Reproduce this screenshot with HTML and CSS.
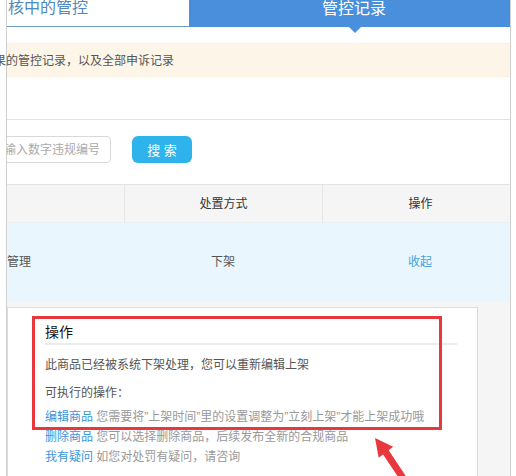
FILE: index.html
```html
<!DOCTYPE html>
<html lang="zh-CN">
<head>
<meta charset="utf-8">
<title>管控记录</title>
<link rel="stylesheet" href="styles.css">
</head>
<body>
<div class="wrap">
  <div class="tabs">
    <div class="tab">核中的管控</div>
    <div class="tab active">管控记录</div>
  </div>
  <div class="notice">结果的管控记录，以及全部申诉记录</div>
  <div class="search">
    <input class="kw" type="text" placeholder="请输入数字违规编号">
    <button class="btn">搜 索</button>
  </div>
  <div class="table">
    <div class="thead">
      <div class="c c1"></div>
      <div class="c c2">处置方式</div>
      <div class="c c3">操作</div>
    </div>
    <div class="trow">
      <div class="c c1">管理</div>
      <div class="c c2">下架</div>
      <div class="c c3"><a class="link">收起</a></div>
    </div>
    <div class="detail">
      <div class="panel">
        <div class="ptitle">操作</div>
        <p class="ptext first">此商品已经被系统下架处理，您可以重新编辑上架</p>
        <p class="ptext second">可执行的操作：</p>
        <ul class="ops">
          <li><a class="link">编辑商品</a> <span class="desc">您需要将”上架时间”里的设置调整为”立刻上架”才能上架成功哦</span></li>
          <li><a class="link">删除商品</a> <span class="desc">您可以选择删除商品，后续发布全新的合规商品</span></li>
          <li><a class="link">我有疑问</a> <span class="desc">如您对处罚有疑问，请咨询</span></li>
        </ul>
      </div>
    </div>
  </div>
</div>
<svg class="annot" width="516" height="476" viewBox="0 0 516 476">
  <rect x="33.5" y="317.5" width="407" height="111" fill="none" stroke="#e8383d" stroke-width="3"/>
  <polygon fill="#e8383d" points="375,438 393.1,446.8 388.7,450.2 411,484 405.5,488 383.1,454.4 378.7,457.8"/>
</svg>
</body>
</html>
```
FILE: styles.css
```css
* { box-sizing: border-box; }
html, body {
  margin: 0;
  padding: 0;
  background: #fff;
  overflow: hidden;
}
body {
  width: 516px;
  height: 476px;
  font-family: "Liberation Sans", "Noto Sans CJK SC", sans-serif;
  font-size: 12px;
  color: #555;
}
.wrap {
  margin-left: 6px;
  width: 505px;
  height: 560px;
  border-left: 1px solid #cfcfcf;
  border-right: 1px solid #cfcfcf;
}
.tabs {
  display: flex;
  height: 37px;
  margin-top: -10px;
}
.tab {
  width: 182px;
  border-bottom: 1px solid #6f9bc2;
  font-size: 16px;
  line-height: 36px;
  color: #4f89bb;
  padding-left: 1px;
}
.tab.active {
  flex: 1;
  width: auto;
  border-bottom: none;
  background: #4a8fdc;
  color: #fff;
  line-height: 37px;
  text-align: center;
  padding-left: 9px;
  position: relative;
}
.tab.active::after {
  content: "";
  position: absolute;
  left: 160px;
  bottom: -6px;
  border-left: 6px solid transparent;
  border-right: 6px solid transparent;
  border-top: 6px solid #4a8fdc;
}
.notice {
  margin-top: 16px;
  height: 34px;
  line-height: 34px;
  background: #fdf6e8;
  border-top: 1px solid #f8efde;
  border-bottom: 1px solid #f8efde;
  text-indent: -25px;
  white-space: nowrap;
  color: #555;
}
.search {
  margin-top: 42px;
  border-top: 1px solid #e3e3e3;
  padding: 16px 0 21px;
  display: flex;
  align-items: center;
  gap: 21px;
  overflow: hidden;
}
.kw {
  margin-left: -30px;
  width: 134px;
  flex: none;
  height: 27px;
  border: 1px solid #d9d9d9;
  border-radius: 4px;
  padding: 0 0 0 14px;
  font-family: inherit;
  font-size: 12px;
  color: #555;
  background: #fff;
  outline: none;
}
.kw::placeholder { color: #aaa; }
.btn {
  width: 60px;
  height: 27px;
  border: none;
  border-radius: 6px;
  background: #2eb3ec;
  color: #fff;
  font-family: inherit;
  font-size: 13px;
  padding: 0;
}
.thead, .trow {
  display: grid;
  grid-template-columns: 117px 198px 1fr;
}
.thead {
  height: 39px;
  border-top: 1px solid #e3e3e3;
  border-bottom: 1px solid #eaf0f3;
  background: #f5f5f5;
  line-height: 38px;
  color: #333;
  text-align: center;
}
.thead .c2, .thead .c3 { border-left: 1px solid #e6e6e6; }
.c3 { padding-left: 8px; }
.trow {
  height: 79px;
  background: #e9f6fd;
  line-height: 79px;
  text-align: center;
  color: #555;
}
.trow .c1 { text-align: left; }
.link { color: #4a9fdc; cursor: pointer; }
.detail {
  background: #f5f5f5;
  padding: 5px 32px 0 0;
}
.panel {
  background: #fff;
  border: 1px solid #dcdcdc;
  border-bottom: none;
  padding: 14px 20px 40px 37px;
}
.ptitle {
  font-size: 14px;
  font-weight: normal;
  color: #111;
  line-height: 20px;
  padding-bottom: 1px;
  border-bottom: 2px solid #ececec;
}
.ptext {
  margin: 0;
  line-height: 20px;
  color: #555;
}
.ptext.first { margin-top: 10px; }
.ptext.second { margin-top: 8px; }
.ops {
  list-style: none;
  margin: 4px 0 0;
  padding: 0;
  line-height: 20px;
  white-space: nowrap;
}
.ops .link { color: #3b95d8; }
.desc { color: #999; }
.annot {
  position: absolute;
  left: 0;
  top: 0;
  pointer-events: none;
}
```
